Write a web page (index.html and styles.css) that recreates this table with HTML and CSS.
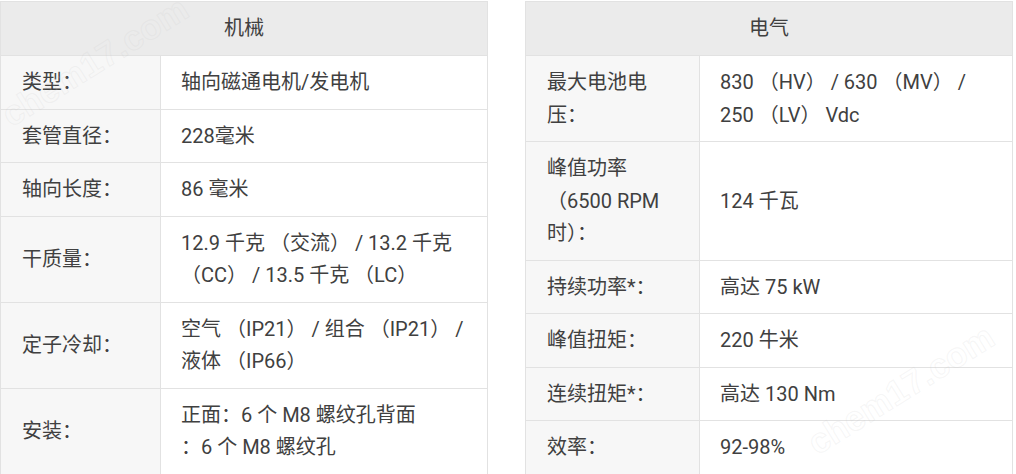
FILE: index.html
```html
<!DOCTYPE html>
<html lang="zh">
<head>
<meta charset="utf-8">
<title>规格</title>
<link rel="stylesheet" href="styles.css">
</head>
<body>
<div class="page">
  <table class="spec spec-mech">
    <colgroup><col class="col-label"><col class="col-value"></colgroup>
    <thead>
      <tr><th colspan="2">机械</th></tr>
    </thead>
    <tbody>
      <tr><td class="label">类型：</td><td class="value">轴向磁通电机/发电机</td></tr>
      <tr><td class="label">套管直径：</td><td class="value">228毫米</td></tr>
      <tr><td class="label">轴向长度：</td><td class="value">86 毫米</td></tr>
      <tr><td class="label">干质量：</td><td class="value">12.9 千克 （交流） / 13.2 千克<br>（CC） / 13.5 千克 （LC）</td></tr>
      <tr><td class="label">定子冷却：</td><td class="value">空气 （IP21） / 组合 （IP21） /<br>液体 （IP66）</td></tr>
      <tr><td class="label">安装：</td><td class="value">正面：6 个 M8 螺纹孔背面<br>：6 个 M8 螺纹孔</td></tr>
    </tbody>
  </table>
  <table class="spec spec-elec">
    <colgroup><col class="col-label"><col class="col-value"></colgroup>
    <thead>
      <tr><th colspan="2">电气</th></tr>
    </thead>
    <tbody>
      <tr><td class="label">最大电池电<br>压：</td><td class="value">830 （HV） / 630 （MV） /<br>250 （LV） Vdc</td></tr>
      <tr><td class="label">峰值功率<br>（6500 RPM<br>时）：</td><td class="value">124 千瓦</td></tr>
      <tr><td class="label">持续功率*：</td><td class="value">高达 75 kW</td></tr>
      <tr><td class="label">峰值扭矩：</td><td class="value">220 牛米</td></tr>
      <tr><td class="label">连续扭矩*：</td><td class="value">高达 130 Nm</td></tr>
      <tr><td class="label">效率：</td><td class="value">92-98%</td></tr>
    </tbody>
  </table>
  <div class="watermark wm-top">chem17.com</div>
  <div class="watermark wm-bottom">chem17.com</div>
</div>
</body>
</html>
```

FILE: styles.css
```css
html, body {
  margin: 0;
  padding: 0;
  background: #ffffff;
}

body {
  font-family: "Roboto", "Noto Sans CJK SC", sans-serif;
  font-size: 20px;
  color: #404040;
}

.page {
  position: relative;
  display: flex;
  gap: 37px;
  padding-top: 1px;
  width: 1016px;
  height: 473px;
  overflow: hidden;
}

.spec {
  width: 488px;
  border-collapse: collapse;
  table-layout: fixed;
  flex: none;
}

.spec-mech .col-label { width: 160px; }
.spec-elec .col-label { width: 174px; }

.spec th,
.spec td {
  border: 1px solid #e2e2e2;
  padding: 10px 20px;
  line-height: 32.5px;
  vertical-align: middle;
  text-align: left;
  white-space: nowrap;
}

.spec th {
  background: #ebebeb;
  font-weight: normal;
  text-align: center;
  padding: 10px 20px 10.5px;
}

.spec .label {
  background: #f7f7f7;
  padding-left: 21px;
}

.spec .value {
  background: #ffffff;
  padding-left: 20px;
}

.watermark {
  position: absolute;
  font-family: "Liberation Sans", Arial, sans-serif;
  font-size: 35px;
  line-height: 1;
  font-weight: bold;
  color: transparent;
  -webkit-text-stroke: 1px rgba(200, 200, 200, 0.18);
  transform: rotate(-32deg);
  transform-origin: left bottom;
  white-space: nowrap;
  pointer-events: none;
}

.wm-top {
  left: 14px;
  top: 97px;
}

.wm-bottom {
  left: 820px;
  top: 425px;
}
```
